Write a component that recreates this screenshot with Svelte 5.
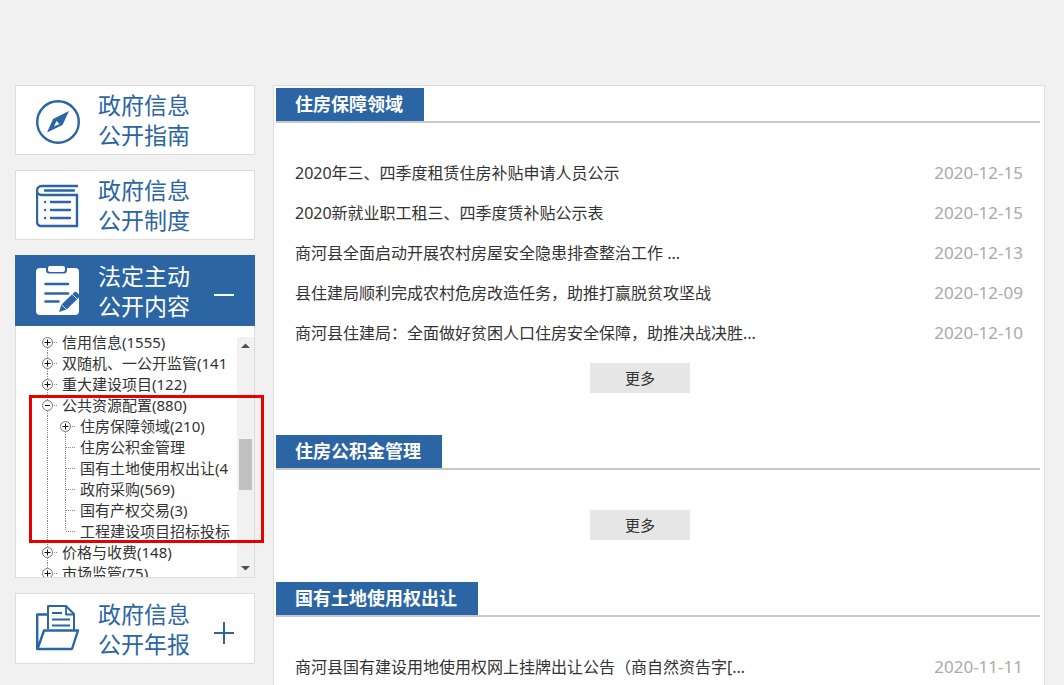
<script>
  let openPanel = $state('content');
  let resourcesOpen = $state(true);

  const resources = [
    { label: '住房保障领域(210)', branch: true },
    { label: '住房公积金管理' },
    { label: '国有土地使用权出让(4' },
    { label: '政府采购(569)' },
    { label: '国有产权交易(3)' },
    { label: '工程建设项目招标投标' }
  ];

  const tree = [
    { label: '信用信息(1555)' },
    { label: '双随机、一公开监管(141' },
    { label: '重大建设项目(122)' },
    { label: '公共资源配置(880)', children: resources },
    { label: '价格与收费(148)' },
    { label: '市场监管(75)' }
  ];

  const sections = [
    {
      title: '住房保障领域',
      items: [
        ['2020年三、四季度租赁住房补贴申请人员公示', '2020-12-15'],
        ['2020新就业职工租三、四季度赁补贴公示表', '2020-12-15'],
        ['商河县全面启动开展农村房屋安全隐患排查整治工作 ...', '2020-12-13'],
        ['县住建局顺利完成农村危房改造任务，助推打赢脱贫攻坚战', '2020-12-09'],
        ['商河县住建局：全面做好贫困人口住房安全保障，助推决战决胜...', '2020-12-10']
      ]
    },
    { title: '住房公积金管理', items: [] },
    {
      title: '国有土地使用权出让',
      items: [['商河县国有建设用地使用权网上挂牌出让公告（商自然资告字[...', '2020-11-11']]
    }
  ];

  function toggle(name) {
    openPanel = openPanel === name ? '' : name;
  }
</script>

{#snippet knob(open, first)}
  <svg class="knob" width="20" height="21" viewBox="0 0 20 21" aria-hidden="true">
    <path class="dots" d={first ? 'M9.5 10V21M10 10.5H20' : 'M9.5 0V21M10 10.5H20'} />
    <circle cx="9.5" cy="10.5" r="5" />
    <path class="mark" d={open ? 'M7 10.5H12' : 'M6.5 10.5H12.5M9.5 7.5V13.5'} />
  </svg>
{/snippet}

<div class="page">
  <aside>
    <a class="card" href="#guide">
      <svg class="icon" viewBox="0 0 44 52" aria-hidden="true">
        <circle cx="22" cy="28" r="20.8" fill="none" stroke="currentColor" stroke-width="2.4" />
        <path fill="currentColor" fill-rule="evenodd" d="M33 17L17 25L11 38.500L26.500 31ZM20.500 27L23.500 30L18 32.500Z" />
      </svg>
      <span class="name">政府信息<br />公开指南</span>
    </a>

    <a class="card" href="#rules">
      <svg class="icon" viewBox="0 0 44 52" fill="none" stroke="currentColor" stroke-width="2.4" aria-hidden="true">
        <path d="M42 7H5.500A4.500 4.500 0 0 0 5.500 16H41V47H5A4 4 0 0 1 1 43V11.500" />
        <path stroke-linecap="round" d="M9 11.500H38M15 23H34M15 31H34M15 39H34" />
        <path stroke-linecap="round" d="M9 23h.1M9 31h.1M9 39h.1" />
      </svg>
      <span class="name">政府信息<br />公开制度</span>
    </a>

    <div class="group">
      <button class="card folding active" aria-expanded={openPanel === 'content'} onclick={() => toggle('content')}>
        <svg class="icon" viewBox="0 0 44 52" aria-hidden="true">
          <path fill="currentColor" d="M4 3H10V5Q10 8.500 13 8.500H28Q31 8.500 31 5V3H39Q43 3 43 7V46Q43 50 39 50H4Q0 50 0 46V7Q0 3 4 3Z" />
          <rect x="12" y="1" width="17" height="6" rx="2" fill="currentColor" />
          <path fill="none" stroke="#2b65a4" stroke-width="2.600" stroke-linecap="round" d="M9.500 19H32M9.500 28.500H32M9.500 36.500H22.500" />
          <path fill="#2b65a4" d="M23 47L25.500 39.500L38 27.500Q39.500 26 41.500 28L43 29.500Q44 31.500 42.500 33L30.500 44.500Z" />
          <path fill="none" stroke="currentColor" stroke-width="0.800" d="M36 29L41.500 34.500M25.500 39.500L30.500 44.500" />
        </svg>
        <span class="name">法定主动<br />公开内容</span>
        <svg class="sign" viewBox="0 0 20 22" aria-hidden="true">
          <path d={openPanel === 'content' ? 'M0 11H20' : 'M0 11H20M10 0V22'} />
        </svg>
      </button>

      {#if openPanel === 'content'}
        <div class="panel">
          <ul class="tree">
            {#each tree as node, n}
              <li>
                {#if node.children}
                  <div class="row">
                    <button class="toggle" aria-label={node.label} aria-expanded={resourcesOpen} onclick={() => (resourcesOpen = !resourcesOpen)}>
                      {@render knob(resourcesOpen, false)}
                    </button>
                    <a href="#node">{node.label}</a>
                  </div>
                  {#if resourcesOpen}
                    <ul>
                      {#each node.children as child, i}
                        <li class="row">
                          <svg width="18" height="21" viewBox="0 0 18 21" aria-hidden="true">
                            <path class="dots" d="M9.500 0V21" />
                          </svg>
                          {#if child.branch}
                            <button class="toggle" aria-label={child.label}>{@render knob(false, i === 0)}</button>
                          {:else}
                            <svg class="knob" width="20" height="21" viewBox="0 0 20 21" aria-hidden="true">
                              <path class="dots" d={i === node.children.length - 1 ? 'M9.500 0V10M10 10.500H20' : 'M9.500 0V21M10 10.500H20'} />
                            </svg>
                          {/if}
                          <a href="#node">{child.label}</a>
                        </li>
                      {/each}
                    </ul>
                  {/if}
                {:else}
                  <div class="row">
                    <button class="toggle" aria-label={node.label}>{@render knob(false, n === 0)}</button>
                    <a href="#node">{node.label}</a>
                  </div>
                {/if}
              </li>
            {/each}
          </ul>
          <div class="scrollbar" aria-hidden="true">
            <svg width="17" height="17" viewBox="0 0 17 17"><path d="M4 11L8.500 6.500L13 11Z" /></svg>
            <div class="track"><div class="thumb"></div></div>
            <svg width="17" height="17" viewBox="0 0 17 17"><path d="M4 6L8.500 10.500L13 6Z" /></svg>
          </div>
          <div class="highlight"></div>
        </div>
      {/if}
    </div>

    <button class="card folding" aria-expanded={openPanel === 'report'} onclick={() => toggle('report')}>
      <svg class="icon" viewBox="0 0 44 52" fill="none" stroke="currentColor" stroke-width="2.4" stroke-linejoin="round" aria-hidden="true">
        <path d="M11 11.500H1.200V46H36L42 27.500H8L1.500 46" />
        <path stroke-width="2" d="M12 26V3H30L38 11V27" />
        <path stroke-width="1.800" d="M30 3V11.500H38M16 10H26M16 16.500H34M16 22.500H34" />
      </svg>
      <span class="name">政府信息<br />公开年报</span>
      <svg class="sign" viewBox="0 0 20 22" aria-hidden="true">
        <path d={openPanel === 'report' ? 'M0 11H20' : 'M0 11H20M10 0V22'} />
      </svg>
    </button>
  </aside>

  <main>
    {#each sections as section}
      <section>
        <header><h2>{section.title}</h2></header>
        <ul class="news">
          {#each section.items as [title, date]}
            <li><a href="#article">{title}</a><time datetime={date}>{date}</time></li>
          {/each}
        </ul>
        <div class="actions"><button class="more">更多</button></div>
      </section>
    {/each}
  </main>
</div>

<style>
  :global(body) {
    margin: 0;
    background: #f1f1f1;
  }

  .page {
    box-sizing: border-box;
    display: flex;
    align-items: flex-start;
    gap: 18px;
    height: 100vh;
    padding: 85px 19px 0 15px;
    overflow: hidden;
    color: #333;
    font-family: 'Noto Sans', 'Noto Sans CJK SC', sans-serif;
    font-size: 16px;
  }

  ul {
    margin: 0;
    padding: 0;
    list-style: none;
  }

  a {
    color: inherit;
    text-decoration: none;
  }

  button {
    font-family: inherit;
    color: inherit;
    cursor: pointer;
  }

  aside {
    display: flex;
    flex: 0 0 240px;
    flex-direction: column;
    gap: 15px;
    min-width: 0;
  }

  .card {
    box-sizing: border-box;
    display: flex;
    align-items: center;
    gap: 18px;
    width: 100%;
    height: 70px;
    padding: 0 20px;
    border: 1px solid #ddd;
    background: #fff;
    color: #2b65a4;
    text-align: left;
  }

  .card.folding {
    height: 71px;
  }

  .card.active {
    border-color: #2b65a4;
    background: #2b65a4;
    color: #fff;
  }

  .icon {
    flex: none;
    width: 44px;
    height: 52px;
  }

  .name {
    flex: 1;
    font-size: 23px;
    font-weight: 400;
    line-height: 30px;
    white-space: nowrap;
  }

  .sign {
    flex: none;
    width: 20px;
    height: 22px;
    padding-top: 8px;
    fill: none;
    stroke: currentColor;
    stroke-width: 2;
  }

  .panel {
    position: relative;
    display: flex;
    padding: 6px 0 0 22px;
    border: 1px solid #ddd;
    border-top: 0;
    background: #fff;
  }

  .tree {
    flex: 1;
    min-width: 0;
    height: 245px;
    margin-right: 7px;
    overflow: hidden;
    font-size: 15px;
    line-height: 21px;
  }

  .row {
    display: flex;
    height: 21px;
    white-space: nowrap;
  }

  .row svg {
    display: block;
    flex: none;
  }

  .toggle {
    padding: 0;
    border: 0;
    background: none;
  }

  .row a {
    margin-left: 4px;
  }

  .dots {
    fill: none;
    stroke: #888;
    stroke-dasharray: 1 1;
  }

  .knob circle {
    fill: #fff;
    stroke: #777;
  }

  .mark {
    fill: none;
    stroke: #111;
  }

  .scrollbar {
    display: flex;
    flex: 0 0 17px;
    flex-direction: column;
    margin-top: 5px;
    background: #f1f1f1;
  }

  .scrollbar path {
    fill: #505050;
  }

  .track {
    flex: 1;
    padding: 85px 2px 0;
  }

  .thumb {
    height: 51px;
    background: #c1c1c1;
  }

  .highlight {
    position: absolute;
    top: 69px;
    left: 13px;
    box-sizing: border-box;
    width: 235px;
    height: 148px;
    border: 3px solid #e60000;
    pointer-events: none;
  }

  main {
    flex: 1;
    min-width: 0;
    padding: 2px 4px 2px 2px;
    border: 1px solid #ddd;
    background: #fff;
  }

  section {
    margin-bottom: 42px;
  }

  header {
    display: flex;
    border-bottom: 2px solid #c8c8c8;
  }

  h2 {
    margin: 0;
    padding: 0 21px 0 19px;
    background: #2b65a4;
    color: #fff;
    font-size: 18px;
    font-weight: 700;
    line-height: 33px;
  }

  .news {
    padding: 30px 17px 10px 19px;
  }

  .news li {
    display: flex;
    justify-content: space-between;
    line-height: 40px;
    white-space: nowrap;
  }

  time {
    color: #aaa;
    font-size: 17px;
  }

  .actions {
    display: flex;
    justify-content: center;
    padding-right: 36px;
  }

  .more {
    width: 100px;
    height: 30px;
    padding: 0;
    border: 0;
    background: #e6e6e6;
    font-size: 15px;
    line-height: 30px;
  }
</style>
